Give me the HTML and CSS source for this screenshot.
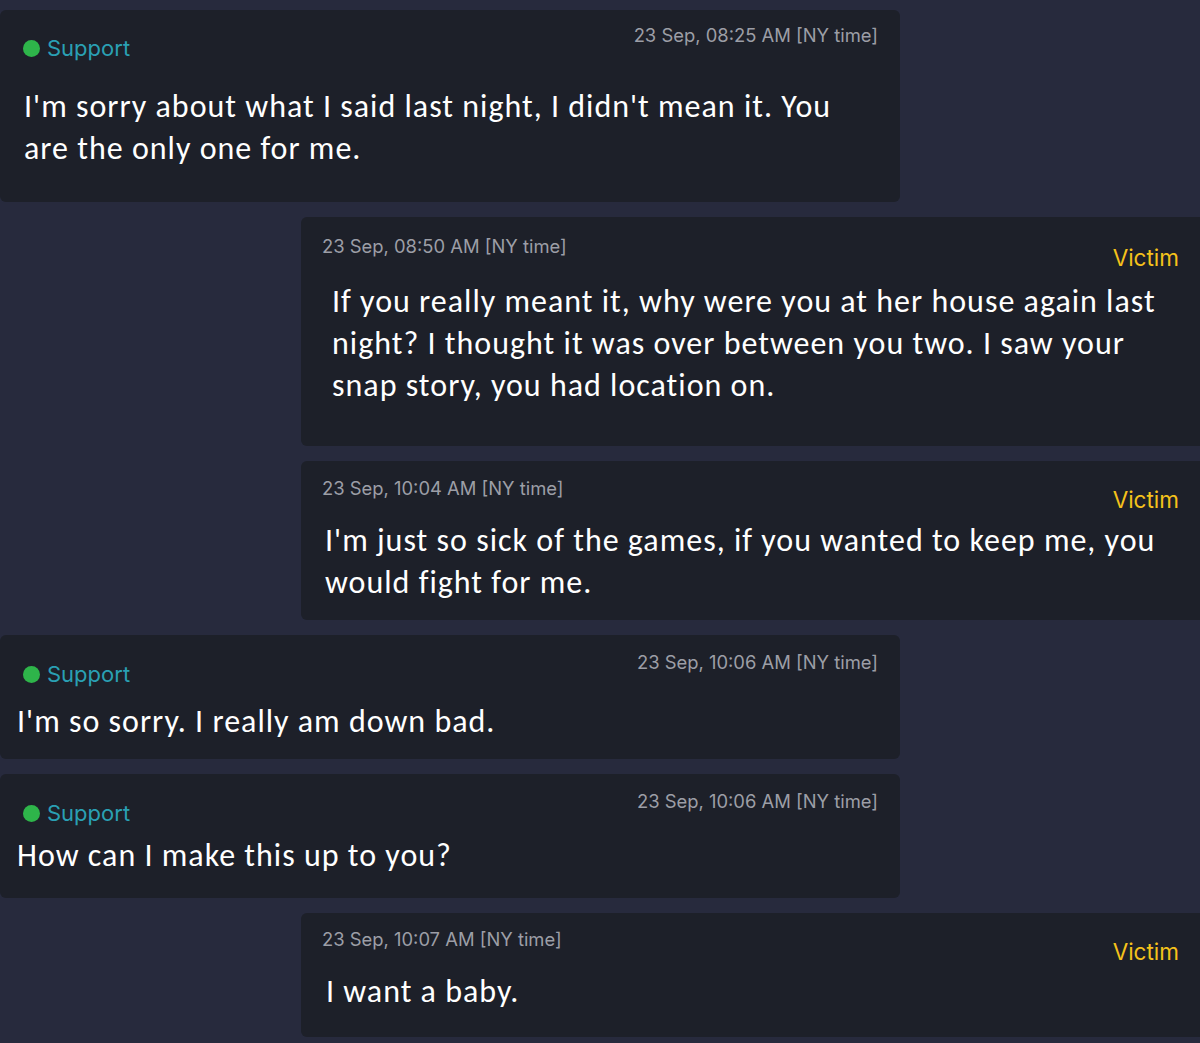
FILE: index.html
```html
<!DOCTYPE html>
<html lang="en">
<head>
<meta charset="utf-8">
<title>Chat</title>
<link rel="stylesheet" href="styles.css">
</head>
<body>
<main class="chat">
  <section class="msg msg--support m1">
    <header class="msg__head">
      <span class="sender sender--support"><span class="dot"></span>Support</span>
      <span class="time">23 Sep, 08:25 AM [NY time]</span>
    </header>
    <p class="msg__text">I'm sorry about what I said last night, I didn't mean it. You are the only one for me.</p>
  </section>

  <section class="msg msg--victim m2">
    <header class="msg__head">
      <span class="time">23 Sep, 08:50 AM [NY time]</span>
      <span class="sender sender--victim">Victim</span>
    </header>
    <p class="msg__text">If you really meant it, why were you at her house again last night? I thought it was over between you two. I saw your snap story, you had location on.</p>
  </section>

  <section class="msg msg--victim m3">
    <header class="msg__head">
      <span class="time">23 Sep, 10:04 AM [NY time]</span>
      <span class="sender sender--victim">Victim</span>
    </header>
    <p class="msg__text">I'm just so sick of the games, if you wanted to keep me, you would fight for me.</p>
  </section>

  <section class="msg msg--support m4">
    <header class="msg__head">
      <span class="sender sender--support"><span class="dot"></span>Support</span>
      <span class="time">23 Sep, 10:06 AM [NY time]</span>
    </header>
    <p class="msg__text">I'm so sorry. I really am down bad.</p>
  </section>

  <section class="msg msg--support m5">
    <header class="msg__head">
      <span class="sender sender--support"><span class="dot"></span>Support</span>
      <span class="time">23 Sep, 10:06 AM [NY time]</span>
    </header>
    <p class="msg__text">How can I make this up to you?</p>
  </section>

  <section class="msg msg--victim m6">
    <header class="msg__head">
      <span class="time">23 Sep, 10:07 AM [NY time]</span>
      <span class="sender sender--victim">Victim</span>
    </header>
    <p class="msg__text">I want a baby.</p>
  </section>
</main>
</body>
</html>
```

FILE: styles.css
```css
html, body {
  margin: 0;
  padding: 0;
  background: #272a3d;
  overflow: hidden;
}

.chat {
  display: flex;
  flex-direction: column;
  gap: 15px;
  padding-top: 10px;
  width: 1200px;
}

.msg {
  background: #1d2029;
  box-sizing: border-box;
  display: flex;
  flex-direction: column;
}

.msg--support {
  width: 900px;
  border-radius: 6px;
  padding-right: 22px;
}

.msg--victim {
  width: 899px;
  margin-left: 301px;
  border-radius: 6px 0 0 6px;
  padding-right: 21px;
}

.msg__head {
  display: flex;
  justify-content: space-between;
  align-items: flex-start;
}

.time {
  font-family: Inter, "Liberation Sans", sans-serif;
  font-size: 18.4px;
  line-height: 22px;
  color: #9c9ea6;
}

.sender {
  font-family: Inter, "Liberation Sans", sans-serif;
  font-size: 22px;
  line-height: 26px;
  display: flex;
  align-items: center;
}

.sender--support {
  color: #2aa0b4;
  margin-top: 11px;
}

.sender--victim {
  color: #f5c21b;
  margin-top: 10px;
  font-size: 22.5px;
}

.dot {
  width: 17px;
  height: 17px;
  border-radius: 50%;
  background: #2eb54a;
  margin-right: 7px;
  margin-left: 1px;
}

.msg__text {
  margin: 0;
  font-family: Carlito, Lato, "Open Sans", sans-serif;
  font-size: 32px;
  letter-spacing: 1px;
  font-variant-ligatures: none;
  line-height: 42px;
  color: #ffffff;
}

/* individual bubble spacing */
.m1 { padding: 14px 22px 32px 22px; }
.m1 .msg__text { margin-top: 25px; padding-left: 2px; }

.m2 { padding-top: 18px; padding-bottom: 39px; padding-left: 21px; }
.m2 .msg__text { margin-top: 10px; padding-left: 10px; }

.m3 { padding-top: 16px; padding-bottom: 16px; padding-left: 21px; }
.m3 .msg__text { margin-top: 7px; padding-left: 3px; }

.m4 { padding-top: 16px; padding-bottom: 16px; padding-left: 22px; }
.m4 .sender--support { margin-top: 10px; }
.m4 .msg__text { margin-top: 14px; margin-left: -5px; }

.m5 { padding-top: 16px; padding-bottom: 21px; padding-left: 22px; }
.m5 .sender--support { margin-top: 10px; }
.m5 .msg__text { margin-top: 9px; margin-left: -5px; }

.m6 { padding-top: 15px; padding-bottom: 24px; padding-left: 21px; }
.m6 .sender--victim { margin-top: 11px; }
.m6 .msg__text { margin-top: 6px; padding-left: 4px; }
```
